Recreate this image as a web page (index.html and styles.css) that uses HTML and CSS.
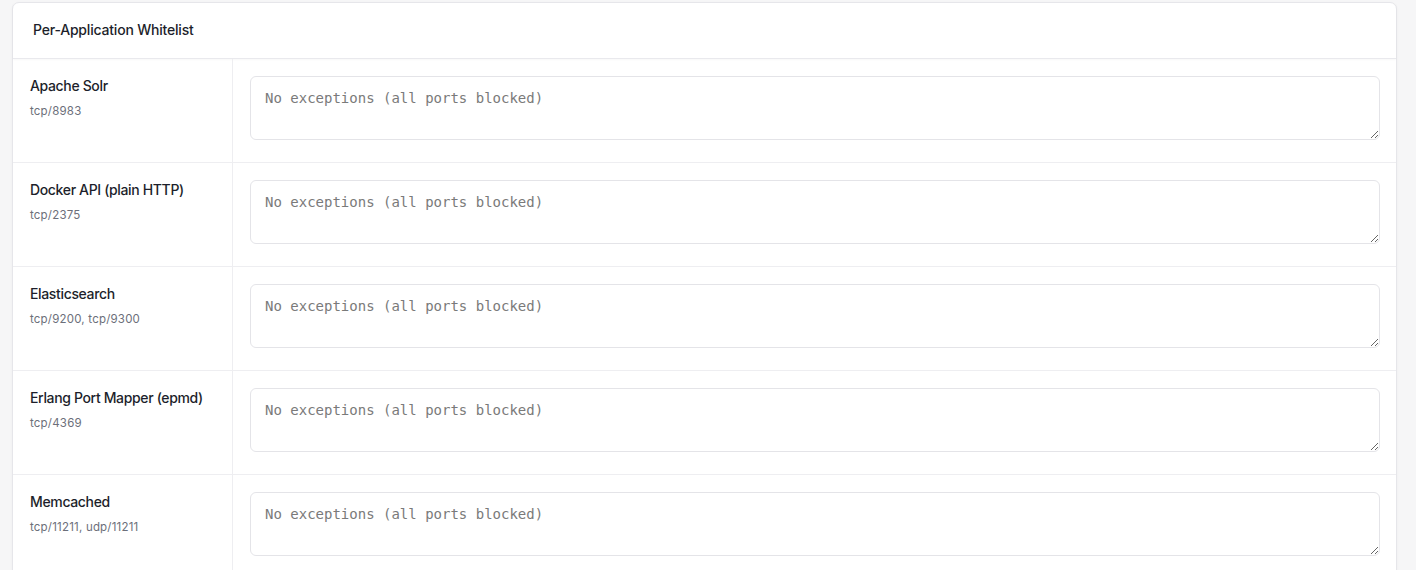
FILE: index.html
```html
<!DOCTYPE html>
<html lang="en">
<head>
    <meta charset="UTF-8">
    <meta name="viewport" content="width=device-width, initial-scale=1.0">
    <title>Per-Application Whitelist</title>
    <link rel="stylesheet" href="styles.css">
</head>
<body>
    <div class="card">
        <div class="card-header">Per-Application Whitelist</div>
        <div class="row">
            <div class="app">
                <div class="app-name">Apache Solr</div>
                <div class="app-ports">tcp/8983</div>
            </div>
            <div class="field">
                <textarea class="whitelist" placeholder="No exceptions (all ports blocked)"></textarea>
            </div>
        </div>
        <div class="row">
            <div class="app">
                <div class="app-name">Docker API (plain HTTP)</div>
                <div class="app-ports">tcp/2375</div>
            </div>
            <div class="field">
                <textarea class="whitelist" placeholder="No exceptions (all ports blocked)"></textarea>
            </div>
        </div>
        <div class="row">
            <div class="app">
                <div class="app-name">Elasticsearch</div>
                <div class="app-ports">tcp/9200, tcp/9300</div>
            </div>
            <div class="field">
                <textarea class="whitelist" placeholder="No exceptions (all ports blocked)"></textarea>
            </div>
        </div>
        <div class="row">
            <div class="app">
                <div class="app-name">Erlang Port Mapper (epmd)</div>
                <div class="app-ports">tcp/4369</div>
            </div>
            <div class="field">
                <textarea class="whitelist" placeholder="No exceptions (all ports blocked)"></textarea>
            </div>
        </div>
        <div class="row">
            <div class="app">
                <div class="app-name">Memcached</div>
                <div class="app-ports">tcp/11211, udp/11211</div>
            </div>
            <div class="field">
                <textarea class="whitelist" placeholder="No exceptions (all ports blocked)"></textarea>
            </div>
        </div>
    </div>
</body>
</html>
```

FILE: styles.css
```css
body {
    margin: 0;
    padding: 2px 19px 20px 12px;
    background-color: #f6f6f7;
    color: #1d1f2b;
    font-family: 'Inter', 'Noto Sans', sans-serif;
}
.card {
    background: #fff;
    border: 1px solid #e6e6ea;
    border-radius: 7px;
    box-shadow: 0 1px 3px rgba(0, 0, 0, 0.04);
}
.card-header {
    box-sizing: border-box;
    height: 56px;
    padding: 0 20px 2px;
    display: flex;
    align-items: center;
    font-size: 14px;
    font-weight: 500;
    letter-spacing: -0.2px;
    border-bottom: 1px solid #e9e9ed;
    box-shadow: 0 1px 2px rgba(0, 0, 0, 0.03);
}
.row {
    display: flex;
    border-bottom: 1px solid #eeeef1;
}
.app {
    width: 202px;
    flex-shrink: 0;
    padding: 18px 0 0 17px;
    border-right: 1px solid #eeeef1;
}
.app-name {
    font-size: 14px;
    font-weight: 500;
    letter-spacing: -0.35px;
    line-height: 18px;
}
.app-ports {
    margin-top: 9px;
    font-size: 11.5px;
    letter-spacing: 0.2px;
    color: #6c6f7a;
}
.field {
    flex: 1;
    padding: 17px 16px 22px 17px;
}
.whitelist {
    display: block;
    width: 100%;
    height: 64px;
    box-sizing: border-box;
    padding: 11px 14px 10px;
    border: 1px solid #e4e4e8;
    border-radius: 6px;
    font-family: 'DejaVu Sans Mono', monospace;
    font-size: 14px;
    line-height: 1.5;
    color: #333;
    resize: vertical;
}
.whitelist::placeholder {
    color: #7a7a7a;
}
```
